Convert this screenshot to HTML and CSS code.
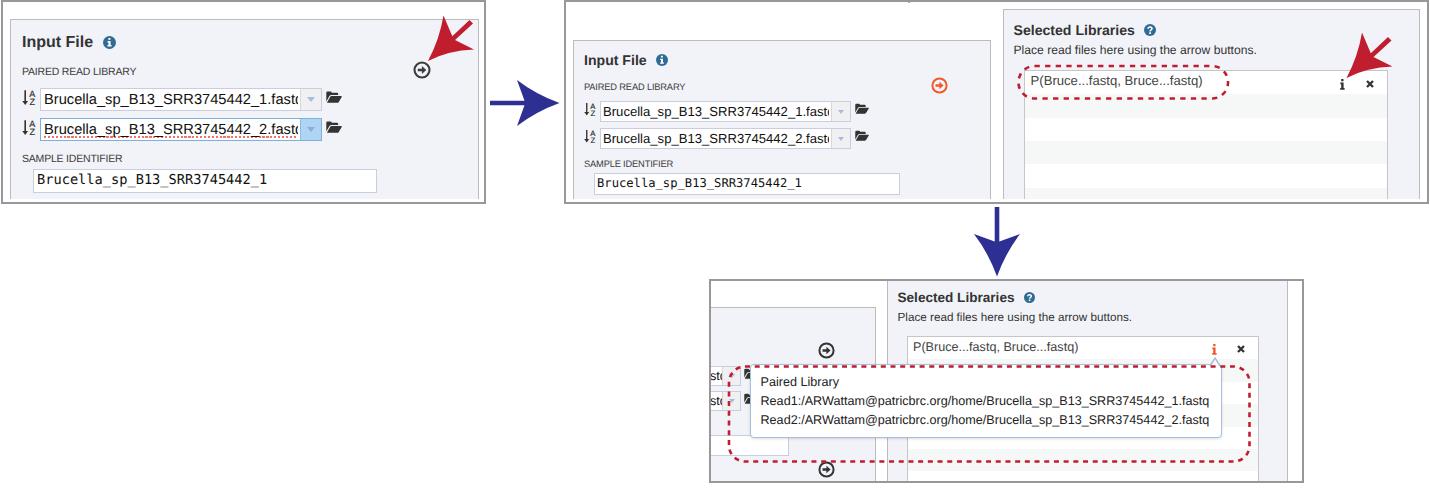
FILE: index.html
```html
<!DOCTYPE html>
<html lang="en">
<head>
<meta charset="utf-8">
<title>Paired read library</title>
<link rel="stylesheet" href="styles.css">
</head>
<body>
<svg class="defs" aria-hidden="true">
  <symbol id="info" viewBox="0 0 12 12"><circle cx="6" cy="6" r="6" fill="#2f6b94"/><path d="M4.900 1.800h2v1.700h-2zM4.200 4.700h2.800v3.700h.9v1.300H4.100V8.400H5V6h-.8z" fill="#fff"/></symbol>
  <symbol id="help" viewBox="0 0 12 12"><circle cx="6" cy="6" r="6" fill="#2f6b94"/><path d="M4.100 4.700C4.100 2.500 8 2.500 8 4.600 8 6 6.100 5.800 6.100 7.400" fill="none" stroke="#fff" stroke-width="1.600"/><path d="M5.200 8.200h1.800v1.700H5.200z" fill="#fff"/></symbol>
  <symbol id="go" viewBox="0 0 18 18"><circle cx="9" cy="9" r="7.500" fill="none" stroke="currentColor" stroke-width="2.100"/><path d="M4.800 7.800h4.100V5L13.300 9l-4.400 4v-2.800H4.800z" fill="currentColor"/></symbol>
  <symbol id="folder" viewBox="0 0 16 13"><path d="M.3 10.400V1.700Q.3.5 1.500.5h3Q5.700.5 5.700 1.700h5.300q1.200 0 1.200 1.200v1.200H5.400Q4.200 4.100 3.400 5.100zM.9 11.700 4.100 6q.5-.9 1.500-.9h9.700q.8 0 .4.8l-2.900 5q-.5.9-1.500.9H1.200q-.4 0-.3-.1z" fill="#333"/></symbol>
  <symbol id="sort" viewBox="0 0 14 16"><path d="M3.200.3v12" stroke="#333" stroke-width="1.600"/><path d="M.3 10.900h5.800l-2.900 4z" fill="#333"/><text x="7.200" y="7" class="az">A</text><text x="7.500" y="15.200" class="az">Z</text></symbol>
  <symbol id="eye" viewBox="0 0 5 11"><path d="M1.200 0h2.300v2.200H1.200zM.3 3.600h3.300v5.500h1v1.600H.2V9.100h1V5.200H.3z" fill="currentColor"/></symbol>
  <symbol id="close" viewBox="0 0 8 8"><path d="M1 1l6 6M7 1L1 7" stroke="#333" stroke-width="2.300"/></symbol>
  <symbol id="red-arrow" viewBox="0 0 48 47" overflow="visible"><path d="M0 45.500Q11.500 24 15.500 0L24.300 20.800 41.500 4.500 45 8.100 27 24.500 46 34Q20 35 0 45.500z" fill="#c01e2e"/></symbol>
  <symbol id="blue-arrow" viewBox="0 0 70 46"><path d="M0 20.700h34.500L27 0Q46 14.500 69.500 23 46 31.500 27 46l7.500-20.700H0z" fill="#2d3092"/></symbol>
</svg>

<main class="board">
  <div class="top">
    <section class="frame one">
      <div class="panel input-panel">
        <h2>Input File <svg class="badge"><use href="#info"/></svg></h2>
        <div class="label first"><span>PAIRED READ LIBRARY</span><svg class="go"><use href="#go"/></svg></div>
        <div class="pick"><svg class="sort"><use href="#sort"/></svg><div class="combo"><span class="value">Brucella_sp_B13_SRR3745442_1.fastq</span><i class="drop"></i></div><svg class="folder"><use href="#folder"/></svg></div>
        <div class="pick"><svg class="sort"><use href="#sort"/></svg><div class="combo focus"><span class="value">Brucella_sp_B13_SRR3745442_2.fastq</span><i class="drop"></i></div><svg class="folder"><use href="#folder"/></svg></div>
        <div class="label second"><span>SAMPLE IDENTIFIER</span></div>
        <div class="field">Brucella_sp_B13_SRR3745442_1</div>
      </div>
    </section>

    <svg class="next"><use href="#blue-arrow"/></svg>

    <section class="frame two">
      <div class="panel input-panel">
        <h2>Input File <svg class="badge"><use href="#info"/></svg></h2>
        <div class="label first"><span>PAIRED READ LIBRARY</span><svg class="go hot"><use href="#go"/></svg></div>
        <div class="pick"><svg class="sort"><use href="#sort"/></svg><div class="combo"><span class="value">Brucella_sp_B13_SRR3745442_1.fastq</span><i class="drop"></i></div><svg class="folder"><use href="#folder"/></svg></div>
        <div class="pick"><svg class="sort"><use href="#sort"/></svg><div class="combo"><span class="value">Brucella_sp_B13_SRR3745442_2.fastq</span><i class="drop"></i></div><svg class="folder"><use href="#folder"/></svg></div>
        <div class="label second"><span>SAMPLE IDENTIFIER</span></div>
        <div class="field">Brucella_sp_B13_SRR3745442_1</div>
      </div>
      <div class="panel selected">
        <h3>Selected Libraries <svg class="badge"><use href="#help"/></svg></h3>
        <p>Place read files here using the arrow buttons.</p>
        <div class="list"><div class="item"><span>P(Bruce...fastq, Bruce...fastq)</span><svg class="eye"><use href="#eye"/></svg><svg class="close"><use href="#close"/></svg></div></div>
      </div>
    </section>
  </div>

  <section class="frame three">
    <div class="panel cut">
      <svg class="go"><use href="#go"/></svg>
      <div class="pick"><div class="combo"><span class="value">stq</span><i class="drop"></i></div><svg class="folder"><use href="#folder"/></svg></div>
      <div class="pick"><div class="combo"><span class="value">stq</span><i class="drop"></i></div><svg class="folder"><use href="#folder"/></svg></div>
      <div class="field"></div>
      <svg class="go"><use href="#go"/></svg>
    </div>
    <div class="panel selected">
      <h3>Selected Libraries <svg class="badge"><use href="#help"/></svg></h3>
      <p>Place read files here using the arrow buttons.</p>
      <div class="list"><div class="item"><span>P(Bruce...fastq, Bruce...fastq)</span><svg class="eye hot"><use href="#eye"/></svg><svg class="close"><use href="#close"/></svg></div></div>
    </div>
    <div class="tooltip">
      <svg class="tip" viewBox="0 0 12 9"><path d="M1 9 6 1l5 8" fill="#fff" stroke="#a5c0da" stroke-width="1.500"/></svg>
      <div>Paired Library</div>
      <div>Read1:/ARWattam@patricbrc.org/home/Brucella_sp_B13_SRR3745442_1.fastq</div>
      <div>Read2:/ARWattam@patricbrc.org/home/Brucella_sp_B13_SRR3745442_2.fastq</div>
    </div>
  </section>

  <svg class="marks" viewBox="0 0 1430 488">
    <use href="#red-arrow" x="428" y="15.500" width="48" height="47"/>
    <use href="#red-arrow" x="1346.500" y="32.500" width="48" height="47"/>
    <use href="#blue-arrow" width="70" height="46" transform="translate(1020 207) rotate(90)"/>
    <rect class="ring" x="1018.500" y="66" width="209.500" height="32.500" rx="16" stroke-dasharray="5.300 5.300"/>
    <rect class="ring" x="729" y="366.500" width="520.500" height="95" rx="16" stroke-dasharray="5 4.700"/>
    <path d="M908.500 2h1.500l-.5 1h-1z" fill="#777"/>
  </svg>
</main>
</body>
</html>
```

FILE: styles.css
```css
* { box-sizing: border-box; }
body { margin: 0; background: #fff; color: #333; font-family: "Liberation Sans", Arial, sans-serif; text-rendering: geometricPrecision; }
h2, h3, p { margin: 0; }
svg { display: block; flex: none; }
.defs { position: absolute; width: 0; height: 0; }
.az { font: 9px "Liberation Sans", Arial, sans-serif; fill: #333; stroke: #333; stroke-width: .2px; }
.board { position: relative; width: 1430px; height: 488px; overflow: hidden; }
.top { display: flex; height: 204px; padding-left: 1px; }
.frame { display: flex; height: 204px; border: 2px solid #98989b; flex: none; overflow: hidden; white-space: nowrap; }
.one { width: 485px; padding: 17px 0 0 7px; }
.two { width: 865px; padding-left: 7px; }
.three { position: relative; width: 595px; margin: 75px 0 0 709px; overflow: visible; }
.next { width: 70px; height: 46px; margin: 80px 4px 0 4px; }

.panel { background: #f2f3f8; border: 1px solid #bcbcbe; border-bottom: 0; flex: none; }
h2, h3, .label, .pick, .item { display: flex; align-items: center; }
.hot { color: #ee5a2a; }
.go { width: 18px; height: 18px; }
.label { height: 16px; letter-spacing: -.2px; color: #3c3c3c; }
.label .go { margin: 0 0 4px auto; }
.combo { display: flex; height: 100%; background: #fff; border: 1px solid #c9cddd; }
.value { display: flex; align-items: center; overflow: hidden; color: #111; }
.drop { display: flex; align-items: center; justify-content: center; margin-left: auto; background: #f0f0f2; border-left: 1px solid #d5d7e2; }
.drop::after { content: ""; border: 4.500px solid transparent; border-top: 5px solid #a9bbdc; border-bottom: 0; }
.field { display: flex; align-items: center; background: #fff; border: 1px solid #c9cddd; color: #111; font-family: "DejaVu Sans Mono", monospace; }

.one .panel { width: 468.500px; height: 180px; padding: 0 46.500px 0 11px; }
.one h2 { height: 44px; padding-top: 1px; font-size: 16px; }
.one .badge { width: 13px; height: 13px; margin: 0 0 1px 10px; }
.one .label { font-size: 10.500px; }
.one .second { margin-top: 10px; }
.one .pick { height: 23px; margin-top: 7px; }
.one .first + .pick { margin-top: 8px; }
.one .sort { width: 14px; height: 16px; margin: 0 4px 4px 0; }
.one .combo { width: 282px; font-size: 14.670px; }
.one .value { width: 254px; margin-left: 3px; }
.one .drop { width: 21px; }
.one .focus { border-color: #7fb0d8; }
.one .focus .drop { background: #aed5f4; border-color: #8fbbe0; }
.one .focus .drop::after { border-top-color: #93a9d6; }
.one .focus .value { background: repeating-linear-gradient(90deg, #f0706a 0 2.200px, transparent 2.200px 3.900px) 0 17px / 100% 2px no-repeat; }
.one .folder { width: 16px; height: 13px; margin: 0 0 5px 4px; }
.one .field { width: 344px; height: 24px; margin: 2px 0 0 11px; padding: 0 0 2px 3px; font-size: 13.670px; }

.two .input-panel { width: 417.500px; height: 159px; margin-top: 38px; padding: 0 41.500px 0 10px; }
.two h2 { height: 38px; font-size: 14.100px; }
.two .badge { width: 12px; height: 12px; margin-left: 9px; }
.two .label { font-size: 9.300px; letter-spacing: -.17px; }
.two .second { height: 15px; margin-top: 7.500px; margin-bottom: .5px; }
.two .go { width: 17px; height: 17px; }
.two .pick { height: 21px; margin-top: 6px; }
.two .sort { width: 12px; height: 15px; margin: 0 4px 4px 0; }
.two .combo { width: 251px; font-size: 13.100px; }
.two .value { width: 226px; margin-left: 2px; }
.two .drop { width: 19px; }
.two .drop::after, .three .drop::after { border-width: 4px 3.500px 0; }
.two .folder { width: 14px; height: 12px; margin: 0 0 5px 4px; }
.two .field { width: 306px; height: 22px; margin: 1px 0 0 10px; padding: 0 0 1px 2px; font-size: 12.170px; }

.list { border: 1px solid #c6c6c8; border-bottom: 0; }
.item span { color: #444; }
.eye { width: 5px; height: 11px; margin-left: auto; }
.close { width: 8px; height: 8px; }
.two .selected { width: 417px; height: 190px; margin: 7px 0 0 12px; padding: 10px 0 0 10px; }
.two h3 { height: 20px; font-size: 14.100px; }
.two p { height: 20px; line-height: 20px; font-size: 12.130px; }
.two .list { width: 364.500px; height: 129px; margin: 10px 0 0 10px; background: repeating-linear-gradient(#fff 0 23.300px, #f6f8f8 23.300px 46.600px); }
.two .item { height: 26px; padding: 0 13px 0 6px; font-size: 13.130px; }
.two .item span { margin-bottom: 7px; }
.two .close { margin-left: 21.500px; }
.three .close { margin-left: 20px; }

.cut { width: 164.500px; height: 174px; margin-top: 26px; border-left: 0; }
.cut .go { width: 17px; height: 17px; margin: 34px 0 0 107px; }
.cut .pick { width: 60px; height: 20px; margin-top: 5px; }
.cut .go + .pick { margin-top: 7px; }
.cut .combo { width: 30px; border-left: 0; font-size: 12.600px; }
.cut .value { width: 10.500px; text-indent: -1px; }
.cut .drop { width: 18px; }
.cut .folder { width: 14px; height: 12px; margin: 0 0 5px 3px; }
.cut .field { width: 78px; height: 21px; margin-top: 24px; border-left: 0; }
.cut .field + .go { margin-top: 5px; }
.three .selected { width: 401.500px; height: 200px; margin-left: 11px; padding: 6px 0 0 10px; border-top: 0; }
.three .badge { width: 11px; height: 11px; margin-left: 10px; }
.three h3 { height: 20px; font-size: 13.580px; }
.three p { height: 20px; padding-top: .5px; line-height: 20px; font-size: 11.690px; }
.three .list { width: 352px; height: 145px; margin: 9px 0 0 9px; background: repeating-linear-gradient(#fff 0 22.400px, #f6f8f8 22.400px 44.800px); }
.three .item { height: 24px; padding: 0 12.500px 0 5.500px; font-size: 12.620px; }
.three .item span { margin-bottom: 5px; }
.tooltip { position: absolute; left: 39px; top: 83px; width: 472px; height: 74px; padding: 8px 0 0 9.500px; background: #fff; border: 1.500px solid #a5c0da; border-radius: 4px; box-shadow: 0 1px 3px #0002; color: #222; font-size: 12.620px; line-height: 19.200px; }
.tip { position: absolute; left: 458px; top: -8px; width: 12px; height: 9px; }

.marks { position: absolute; left: 0; top: 0; width: 1430px; height: 488px; }
.ring { fill: none; stroke: #c01e2e; stroke-width: 2.600; }
```
